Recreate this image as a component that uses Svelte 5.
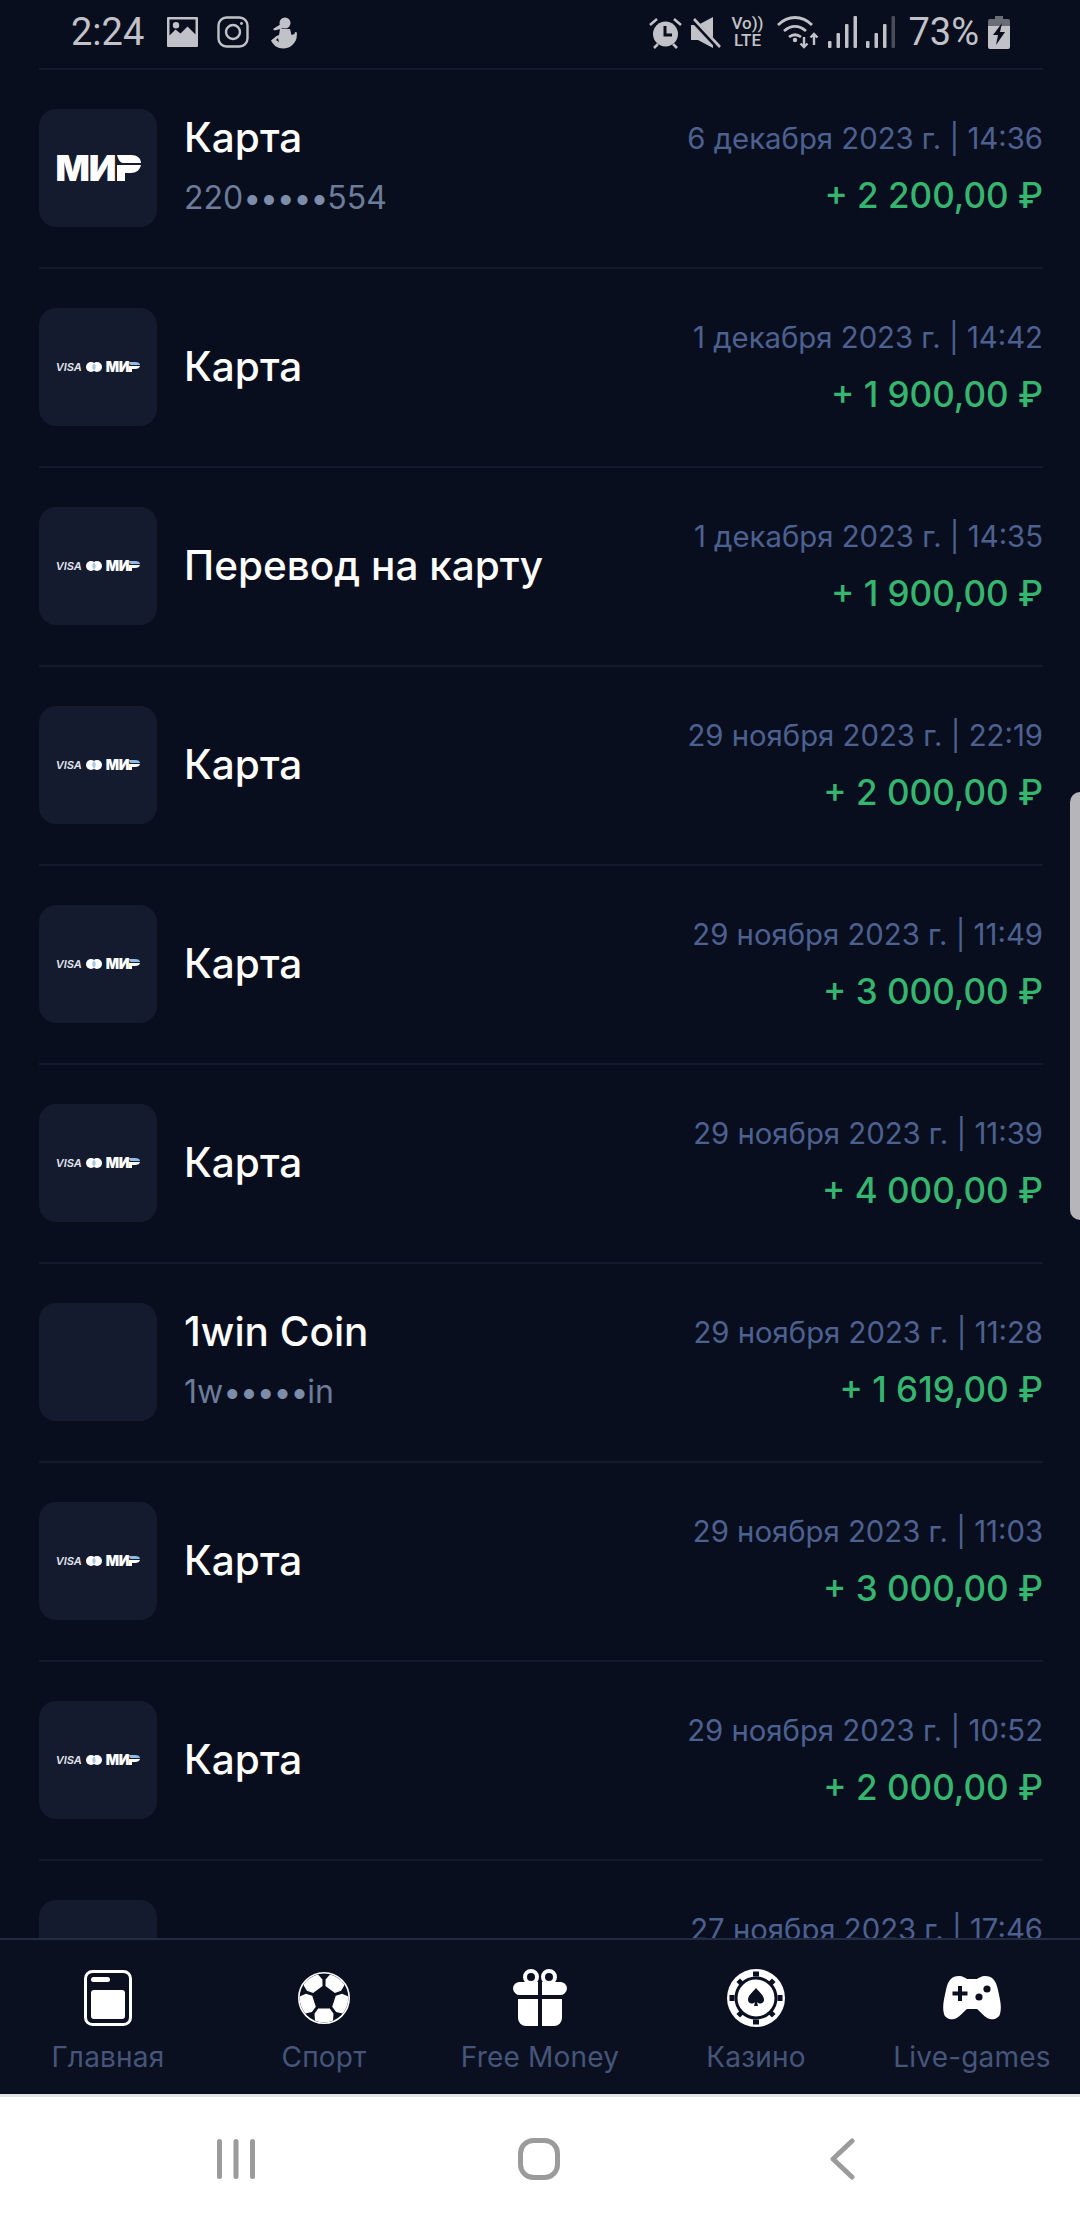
<script>
	const rows = [
		{ title: 'Карта', sub: ['220', '554'], date: '6 декабря 2023 г. | 14:36', sum: '+ 2 200,00 ₽', logo: 'mir' },
		{ title: 'Карта', date: '1 декабря 2023 г. | 14:42', sum: '+ 1 900,00 ₽', logo: 'both' },
		{ title: 'Перевод на карту', date: '1 декабря 2023 г. | 14:35', sum: '+ 1 900,00 ₽', logo: 'both' },
		{ title: 'Карта', date: '29 ноября 2023 г. | 22:19', sum: '+ 2 000,00 ₽', logo: 'both' },
		{ title: 'Карта', date: '29 ноября 2023 г. | 11:49', sum: '+ 3 000,00 ₽', logo: 'both' },
		{ title: 'Карта', date: '29 ноября 2023 г. | 11:39', sum: '+ 4 000,00 ₽', logo: 'both' },
		{ title: '1win Coin', sub: ['1w', 'in'], date: '29 ноября 2023 г. | 11:28', sum: '+ 1 619,00 ₽', logo: '' },
		{ title: 'Карта', date: '29 ноября 2023 г. | 11:03', sum: '+ 3 000,00 ₽', logo: 'both' },
		{ title: 'Карта', date: '29 ноября 2023 г. | 10:52', sum: '+ 2 000,00 ₽', logo: 'both' },
		{ title: '', date: '27 ноября 2023 г. | 17:46', sum: '\u00a0', logo: '' }
	];

	const tabs = ['Главная', 'Спорт', 'Free Money', 'Казино', 'Live-games'];

	// white patches of the ball, in polar coordinates round its centre
	const polar = (r, deg) => {
		const a = (deg * Math.PI) / 180;
		return `${(26 + r * Math.cos(a)).toFixed(2)},${(26 + r * Math.sin(a)).toFixed(2)}`;
	};
	const ballPatches = [-126, -54, 18, 90, 162].map((a) =>
		[polar(12, a - 29), polar(12, a + 29), polar(18.5, a + 31), polar(27, a + 19), polar(27, a - 19), polar(18.5, a - 31)].join(' ')
	);
</script>

<div class="screen">
	<header class="status">
		<div class="status-left">
			<span class="clock">2:24</span>
			<svg width="31" height="30" viewBox="0 0 31 30" class="ic-pic">
				<path fill="#c1c2c7" fill-rule="evenodd" d="M1 0h29a1 1 0 0 1 1 1v28a1 1 0 0 1-1 1H1a1 1 0 0 1-1-1V1a1 1 0 0 1 1-1zM2.500 2.500v16l6-6 5 4 7-7 8 8v-15zM9 5a3.200 3.200 0 1 1 0 6.400A3.200 3.200 0 0 1 9 5z"/>
			</svg>
			<svg width="32" height="32" viewBox="0 0 32 32" class="ic-insta" fill="none" stroke="#c1c2c7" stroke-width="2.400">
				<rect x="1.500" y="1.500" width="29" height="29" rx="8"/>
				<circle cx="16" cy="16" r="7"/>
				<circle cx="24.500" cy="7.500" r="1.400" fill="#c1c2c7" stroke="none"/>
			</svg>
			<svg width="28" height="33" viewBox="13 9 28 33" class="ic-runner" fill="#c1c2c7">
				<circle cx="28" cy="16" r="5.500"/>
				<path d="M24 17l-8 5 1.500 1.500 8-2z"/>
				<path d="M23 22h10l1.500 6 3-1 .5-2 2 .5-.5 6c-2 6-7 10-13 10-6 0-10-3-12.500-8l5.500-4.500 2.500-1zM21 31l-2 2 3 2z"/>
			</svg>
		</div>
		<div class="status-right">
			<svg width="33" height="33" viewBox="0 0 33 33" class="ic-alarm">
				<circle cx="16.500" cy="18" r="12.500" fill="#c1c2c7"/>
				<path d="M16 10v9h7" fill="none" stroke="#090e1e" stroke-width="3"/>
				<path d="M1 9l7-6M32 9l-7-6M5 32l4-4M28 32l-4-4" stroke="#c1c2c7" stroke-width="2.500"/>
			</svg>
			<svg width="30" height="31" viewBox="0 0 30 31" class="ic-mute">
				<path fill="#c1c2c7" d="M0 8h7L22 0v31L7 23H0z"/>
				<path d="M0 1l28 30" stroke="#090e1e" stroke-width="5"/>
				<path d="M3 2l26 28" stroke="#c1c2c7" stroke-width="2.600"/>
			</svg>
			<div class="volte"><span>Vo))</span><span>LTE</span></div>
			<svg width="42" height="34" viewBox="0 0 42 34" class="ic-wifi" fill="none" stroke="#c1c2c7" stroke-width="2.800">
				<path d="M1 10C11 0 25 0 35 10M7 16c7-6 15-6 22 0M12 22c4-3 8-3 12 0"/>
				<circle cx="18" cy="25" r="2.200" fill="#c1c2c7" stroke="none"/>
				<path d="M27 22v10M23.500 28.500l3.500 3.500 3.500-3.500M37 30V19M33.500 22.500l3.500-3.500 3.500 3.500" stroke-width="2.400"/>
			</svg>
			<svg width="29" height="32" viewBox="0 0 29 32" class="ic-sig" fill="#c1c2c7">
				<rect x="0" y="25" width="3.500" height="7" rx="1"/><rect x="8.500" y="17" width="3.500" height="15" rx="1"/><rect x="17" y="8" width="3.500" height="24" rx="1"/><rect x="25.500" y="0" width="3.500" height="32" rx="1"/>
			</svg>
			<svg width="29" height="32" viewBox="0 0 29 32" class="ic-sig" fill="#c1c2c7">
				<rect x="0" y="25" width="3.500" height="7" rx="1"/><rect x="8.500" y="17" width="3.500" height="15" rx="1"/><rect x="17" y="8" width="3.500" height="24" rx="1"/><rect x="25.500" y="0" width="3.500" height="32" rx="1" fill="#4a4d57"/>
			</svg>
			<span class="pct">73%</span>
			<svg width="22" height="33" viewBox="0 0 22 33" class="ic-batt">
				<path fill="#6a6d76" d="M7 0h8v3h5a2 2 0 0 1 2 2v5H0V5a2 2 0 0 1 2-2h5z"/>
				<path fill="#c1c2c7" d="M0 10h22v21a2 2 0 0 1-2 2H2a2 2 0 0 1-2-2z"/>
				<path fill="#090e1e" d="M14 7L5 19h5l-2 10 9-13h-5z"/>
			</svg>
		</div>
	</header>

	<main class="list">
		{#each rows as row}
			<div class="row">
				<div class="tile">
					{#if row.logo === 'mir'}
						<div class="mir">
							<span>МИ</span>
							<svg width="24" height="26" viewBox="0 0 24 26" fill="#fff">
								<path d="M0 0h14c6 0 10 3 10 8H6C3 8 1 4 0 0zM0 10h24c-1 5-5 8-10 8H8v8H0z"/>
							</svg>
						</div>
					{:else if row.logo === 'both'}
						<div class="both">
							<span class="visa">VISA</span>
							<svg width="16" height="10" viewBox="0 0 16 10">
								<circle cx="5" cy="5" r="5" fill="#fff"/>
								<circle cx="11" cy="5" r="5" fill="#fff"/>
								<path d="M8 1.200a5 5 0 0 1 0 7.600a5 5 0 0 1 0-7.600z" fill="#a9c6e4"/>
							</svg>
							<span class="mir-small">МИ</span>
							<svg width="11" height="10" viewBox="0 0 11 10">
								<path d="M0 0h6c3 0 5 1 5 3H2C1 3 0 1.500 0 0z" fill="#8fbce6"/>
								<path d="M0 4h11c-.5 2-2 3-5 3H3v3H0z" fill="#fff"/>
							</svg>
						</div>
					{/if}
				</div>
				<div class="names">
					<div class="title">{row.title}</div>
					{#if row.sub}
						<div class="sub">{row.sub[0]}<span class="dots">•••••</span>{row.sub[1]}</div>
					{/if}
				</div>
				<div class="meta">
					<div class="date">{row.date}</div>
					<div class="sum">{row.sum}</div>
				</div>
			</div>
		{/each}
	</main>

	<nav class="tabs">
		{#each tabs as tab, i}
			<div class="tab">
				<div class="tab-icon">
					{#if i === 0}
						<svg width="48" height="56" viewBox="0 0 48 56">
							<rect x="1.500" y="1.500" width="45" height="53" rx="7" fill="none" stroke="#fff" stroke-width="3"/>
							<rect x="7" y="7" width="19" height="5" rx="2.500" fill="#fff"/>
							<rect x="7" y="20" width="34" height="29" rx="3" fill="#fff"/>
						</svg>
					{:else if i === 1}
						<svg width="52" height="52" viewBox="0 0 52 52">
							<clipPath id="ball-clip"><circle cx="26" cy="26" r="24.300"/></clipPath>
							<circle cx="26" cy="26" r="25.200" fill="#0a1020" stroke="#fff" stroke-width="1.600"/>
							<g fill="#fff" clip-path="url(#ball-clip)">
								{#each ballPatches as points}
									<polygon {points}/>
								{/each}
							</g>
						</svg>
					{:else if i === 2}
						<svg width="54" height="60" viewBox="0 0 54 60" fill="#fff">
							<circle cx="18" cy="9" r="6" fill="none" stroke="#fff" stroke-width="4"/>
							<circle cx="36" cy="9" r="6" fill="none" stroke="#fff" stroke-width="4"/>
							<path d="M7 14h18v13H7a7 7 0 0 1-7-6.500A6.500 6.500 0 0 1 7 14zM29 14h18a6.500 6.500 0 0 1 7 6.500A7 7 0 0 1 47 27H29z"/>
							<path d="M5 31h20v27H13a8 8 0 0 1-8-8zM29 31h20v19a8 8 0 0 1-8 8H29z"/>
						</svg>
					{:else if i === 3}
						<svg width="58" height="58" viewBox="0 0 58 58">
							<circle cx="29" cy="29" r="29" fill="#fff"/>
							<circle cx="29" cy="29" r="20" fill="none" stroke="#0a1020" stroke-width="3"/>
							<g fill="#0a1020">
								<rect x="26" y="2.500" width="6" height="5"/><rect x="26" y="50.500" width="6" height="5"/>
								<rect x="2.500" y="26" width="5" height="6"/><rect x="50.500" y="26" width="5" height="6"/>
								<rect x="10.500" y="10.500" width="5" height="5" transform="rotate(45 13 13)"/>
								<rect x="42.500" y="10.500" width="5" height="5" transform="rotate(45 45 13)"/>
								<rect x="10.500" y="42.500" width="5" height="5" transform="rotate(45 13 45)"/>
								<rect x="42.500" y="42.500" width="5" height="5" transform="rotate(45 45 45)"/>
								<path d="M29 19c3 4 8 7 8 12 0 3-4 5-7 2l1 4h-4l1-4c-3 3-7 1-7-2 0-5 5-8 8-12z"/>
							</g>
						</svg>
					{:else}
						<svg width="58" height="44" viewBox="0 0 58 44">
							<path fill="#fff" d="M16 0c4 0 6 2 8 3h10c2-1 4-3 8-3 7 0 11 4 13 14 2 9 4 17 2 24-1 4-6 6-10 5-5-1-9-7-13-10H24c-4 3-8 9-13 10-4 1-9-1-10-5-2-7 0-15 2-24C5 4 9 0 16 0z"/>
							<path d="M17 10v15M9.500 17.500h15" stroke="#0a1020" stroke-width="4"/>
							<circle cx="44" cy="13" r="3.600" fill="#0a1020"/>
							<circle cx="36" cy="21" r="3.600" fill="#0a1020"/>
						</svg>
					{/if}
				</div>
				<div class="tab-label">{tab}</div>
			</div>
		{/each}
	</nav>

	<footer class="sysnav">
		<svg width="38" height="40" viewBox="0 0 38 40" fill="#9b9b9b">
			<rect x="0" y="0" width="5" height="40" rx="2.500"/>
			<rect x="16.500" y="0" width="5" height="40" rx="2.500"/>
			<rect x="33" y="0" width="5" height="40" rx="2.500"/>
		</svg>
		<svg width="42" height="42" viewBox="0 0 42 42">
			<rect x="2.500" y="2.500" width="37" height="37" rx="13" fill="none" stroke="#9b9b9b" stroke-width="5"/>
		</svg>
		<svg width="26" height="42" viewBox="0 0 26 42">
			<path d="M23 3L4 21l19 18" fill="none" stroke="#9b9b9b" stroke-width="5" stroke-linecap="round" stroke-linejoin="round"/>
		</svg>
	</footer>

	<div class="scrollbar"></div>
</div>

<style>
	:global(body) {
		margin: 0;
		background: #090e1e;
	}

	.screen {
		position: relative;
		width: 1080px;
		height: 2220px;
		display: flex;
		flex-direction: column;
		background: #090e1e;
		font-family: Inter, 'Liberation Sans', sans-serif;
		overflow: hidden;
	}

	.status {
		flex: none;
		height: 68px;
		padding: 0 70px 4px 71px;
		box-sizing: border-box;
		display: flex;
		justify-content: space-between;
		align-items: center;
		color: #c1c2c7;
		font-family: Roboto, sans-serif;
	}

	.status-left,
	.status-right {
		display: flex;
		align-items: center;
	}

	.clock {
		font-size: 38px;
		width: 96px;
	}

	.ic-insta {
		margin-left: 19px;
	}

	.ic-runner {
		margin-left: 21px;
	}

	.ic-mute {
		margin-left: 9px;
	}

	.volte {
		margin-left: 9px;
		width: 34px;
		display: flex;
		flex-direction: column;
		font-size: 17px;
		font-weight: 500;
		line-height: 17px;
		align-items: center;
	}

	.ic-wifi {
		margin-left: 13px;
	}

	.ic-sig {
		margin-left: 9px;
	}

	.pct {
		margin-left: 13px;
		font-size: 38px;
	}

	.ic-batt {
		margin-left: 9px;
	}

	.list {
		flex: 1;
		min-height: 0;
		overflow: hidden;
		padding: 0 37px 0 39px;
	}

	.row {
		height: 199px;
		box-sizing: border-box;
		border-top: 2px solid #141a2d;
		padding: 39px 0 40px;
		display: flex;
		align-items: center;
	}

	.tile {
		flex: none;
		width: 118px;
		height: 118px;
		border-radius: 17px;
		background: #151b2e;
		display: flex;
		align-items: center;
		justify-content: center;
	}

	.mir {
		display: flex;
		align-items: center;
		gap: 1px;
		color: #fff;
		font-size: 36px;
		font-weight: 900;
		line-height: 26px;
		letter-spacing: -1px;
	}

	.both {
		display: flex;
		align-items: center;
		color: #fff;
		line-height: 10px;
	}

	.visa {
		font-size: 11px;
		font-weight: 600;
		font-style: italic;
		margin-right: 4px;
		color: #e3e6ee;
	}

	.mir-small {
		font-size: 14px;
		font-weight: 900;
		margin-left: 4px;
		letter-spacing: -0.4px;
	}

	.names {
		flex: 1;
		margin-left: 27px;
		min-width: 0;
	}

	.title {
		font-size: 40.5px;
		font-weight: 500;
		line-height: 46px;
		color: #fff;
	}

	.sub {
		margin-top: 18px;
		margin-bottom: 4px;
		font-size: 32px;
		line-height: 38px;
		color: #6c7c99;
	}

	.dots {
		color: #7c8ca9;
		letter-spacing: -1.2px;
	}

	.meta {
		flex: none;
		text-align: right;
	}

	.date {
		font-size: 29.3px;
		line-height: 36px;
		color: #4d6191;
	}

	.sum {
		margin-top: 18px;
		font-size: 35px;
		line-height: 40px;
		font-weight: 500;
		color: #36b56f;
	}

	.tabs {
		flex: none;
		height: 156px;
		box-sizing: border-box;
		border-top: 2px solid #232c45;
		background: #0a1020;
		display: grid;
		grid-template-columns: repeat(5, 1fr);
	}

	.tab {
		display: flex;
		flex-direction: column;
		align-items: center;
	}

	.tab-icon {
		height: 60px;
		margin-top: 28px;
		display: flex;
		align-items: center;
		justify-content: center;
	}

	.tab-label {
		margin-top: 11px;
		font-size: 28px;
		letter-spacing: 0.2px;
		line-height: 36px;
		color: #46557a;
		white-space: nowrap;
	}

	.sysnav {
		flex: none;
		height: 126px;
		box-sizing: border-box;
		border-top: 3px solid #e1e4e4;
		background: #fff;
		display: grid;
		grid-template-columns: repeat(3, 303px);
		justify-items: center;
		align-items: center;
		padding-left: 84px;
	}

	.scrollbar {
		position: absolute;
		left: 1070px;
		top: 792px;
		width: 10px;
		height: 428px;
		background: #b5b5ba;
		border-radius: 10px 0 0 10px;
	}
</style>
